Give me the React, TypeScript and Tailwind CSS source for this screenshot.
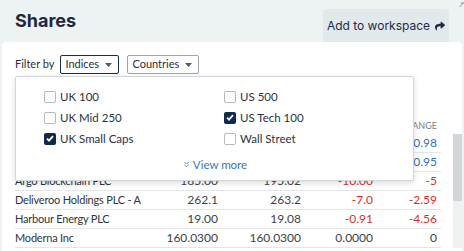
import React from 'react';
import { FaShare } from 'react-icons/fa';
import { ChevronsDown } from 'lucide-react';

type Row = {
  name: string;
  bid: string;
  ask: string;
  change: string;
  pct: string;
};

const rows: Row[] = [
  { name: 'Alphabet Inc - A', bid: '118.52', ask: '117.36', change: '1.15', pct: '0.98' },
  { name: 'Amazon.com Inc', bid: '102.44', ask: '101.47', change: '0.97', pct: '0.95' },
  { name: 'Argo Blockchain PLC', bid: '185.00', ask: '195.02', change: '-10.00', pct: '-5' },
  { name: 'Deliveroo Holdings PLC - A', bid: '262.1', ask: '263.2', change: '-7.0', pct: '-2.59' },
  { name: 'Harbour Energy PLC', bid: '19.00', ask: '19.08', change: '-0.91', pct: '-4.56' },
  { name: 'Moderna Inc', bid: '160.0300', ask: '160.0300', change: '0.0000', pct: '0' },
];

const indices = [
  { label: 'UK 100', checked: false },
  { label: 'US 500', checked: false },
  { label: 'UK Mid 250', checked: false },
  { label: 'US Tech 100', checked: true },
  { label: 'UK Small Caps', checked: true },
  { label: 'Wall Street', checked: false },
];

const tone = (v: string) => {
  if (v.startsWith('-')) return 'text-[#d3312f]';
  if (Number(v) === 0) return 'text-[#3d4349]';
  return 'text-[#2f6fbe]';
};

const Caret = () => (
  <svg width="7" height="4" viewBox="0 0 7 4" className="shrink-0">
    <path d="M0 0h7L3.5 4z" fill="#555b61" />
  </svg>
);

const Checkbox = ({ checked }: { checked: boolean }) =>
  checked ? (
    <span className="w-[12px] h-[12px] rounded-[2px] bg-[#0d2a4e] flex items-center justify-center shrink-0">
      <svg width="8" height="7" viewBox="0 0 8 7">
        <path d="M1 3.6 3 5.6 7 1.2" stroke="#fff" strokeWidth="1.8" fill="none" />
      </svg>
    </span>
  ) : (
    <span className="w-[12px] h-[12px] rounded-[2px] border border-[#b4bac1] bg-white shrink-0" />
  );

export default function App() {
  return (
    <div className="w-[464px] h-[251px] bg-[#edf2f3] overflow-hidden relative flex flex-col font-['Lato',sans-serif]">
      <svg width="5" height="6" viewBox="0 0 5 6" className="absolute right-0 top-[2px]">
        <path d="M0.5 5 4.5 1 M2 1h3" stroke="#8a9196" strokeWidth="1" />
      </svg>

      <div className="flex justify-between items-start px-[15px] h-[42px] shrink-0 font-['Inter',sans-serif]">
        <h1 className="mt-[10px] text-[18px] leading-[22px] font-bold text-[#1b2940]">Shares</h1>
        <button className="mt-[9px] h-[33px] w-[126px] flex items-center justify-center gap-[5px] bg-[#e2e9ec] rounded-t-[3px] text-[12px] text-[#1d2a45]">
          Add to workspace
          <FaShare size={10} />
        </button>
      </div>

      <div className="relative mx-[2px] flex-1 bg-white rounded-t-[4px] pl-[13px]">
        <div className="flex items-center pt-[13px] text-[11px] text-[#27313d]">
          <span>Filter by</span>
          <div className="ml-[6px] w-[59px] h-[19px] border border-[#132d4f] rounded-[2px] flex items-center justify-between pl-[4px] pr-[6px]">
            <span>Indices</span>
            <Caret />
          </div>
          <div className="ml-[8px] w-[72px] h-[19px] border border-[#9ea5ac] rounded-[2px] flex items-center justify-between pl-[4px] pr-[6px]">
            <span>Countries</span>
            <Caret />
          </div>
        </div>

        <div className="mt-[44px] flex">
          <div className="w-[426px]">
            <div className="flex h-[16px] items-center text-[9px] uppercase text-[#7a8087]">
              <div className="w-[143px]">Name</div>
              <div className="w-[60px] text-right">Sell</div>
              <div className="w-[83px] text-right">Buy</div>
              <div className="w-[72px] text-right">Change</div>
              <div className="w-[64px] text-right">% Change</div>
            </div>
            {rows.map(r => (
              <div
                key={r.name}
                className="flex h-[19px] items-center border-b border-[#e3e6e9] text-[12px] text-[#3d4349]"
              >
                <div className="w-[143px] whitespace-nowrap text-[11px] tracking-[-0.2px] text-[#2c3540]">{r.name}</div>
                <div className="w-[60px] text-right">{r.bid}</div>
                <div className="w-[83px] text-right">{r.ask}</div>
                <div className={`w-[72px] text-right ${tone(r.change)}`}>{r.change}</div>
                <div className={`w-[64px] text-right ${tone(r.pct)}`}>{r.pct}</div>
              </div>
            ))}
          </div>
          <div className="ml-[12px] mt-[16px] w-[9px] flex flex-col">
            <div className="h-[67px] bg-[#d2d7da]" />
            <div className="flex-1 bg-[#eef0f1]" />
          </div>
        </div>

        <div className="absolute left-[13px] top-[34px] w-[399px] h-[105px] bg-white border border-[#d3d7db] rounded-[2px] shadow-[0_2px_6px_rgba(0,0,0,0.14)] z-10">
          <div className="grid grid-cols-[180px_180px] pl-[28px] pt-[9px]">
            {indices.map(i => (
              <label key={i.label} className="flex items-center gap-[4px] h-[21px] text-[11.5px] text-[#2a3340]">
                <Checkbox checked={i.checked} />
                {i.label}
              </label>
            ))}
          </div>
          <div className="mt-[7px] flex items-center justify-center gap-[2px] text-[11.5px] text-[#3876c0]">
            <ChevronsDown size={9} strokeWidth={2} />
            <span>View more</span>
          </div>
        </div>
      </div>
    </div>
  );
}
